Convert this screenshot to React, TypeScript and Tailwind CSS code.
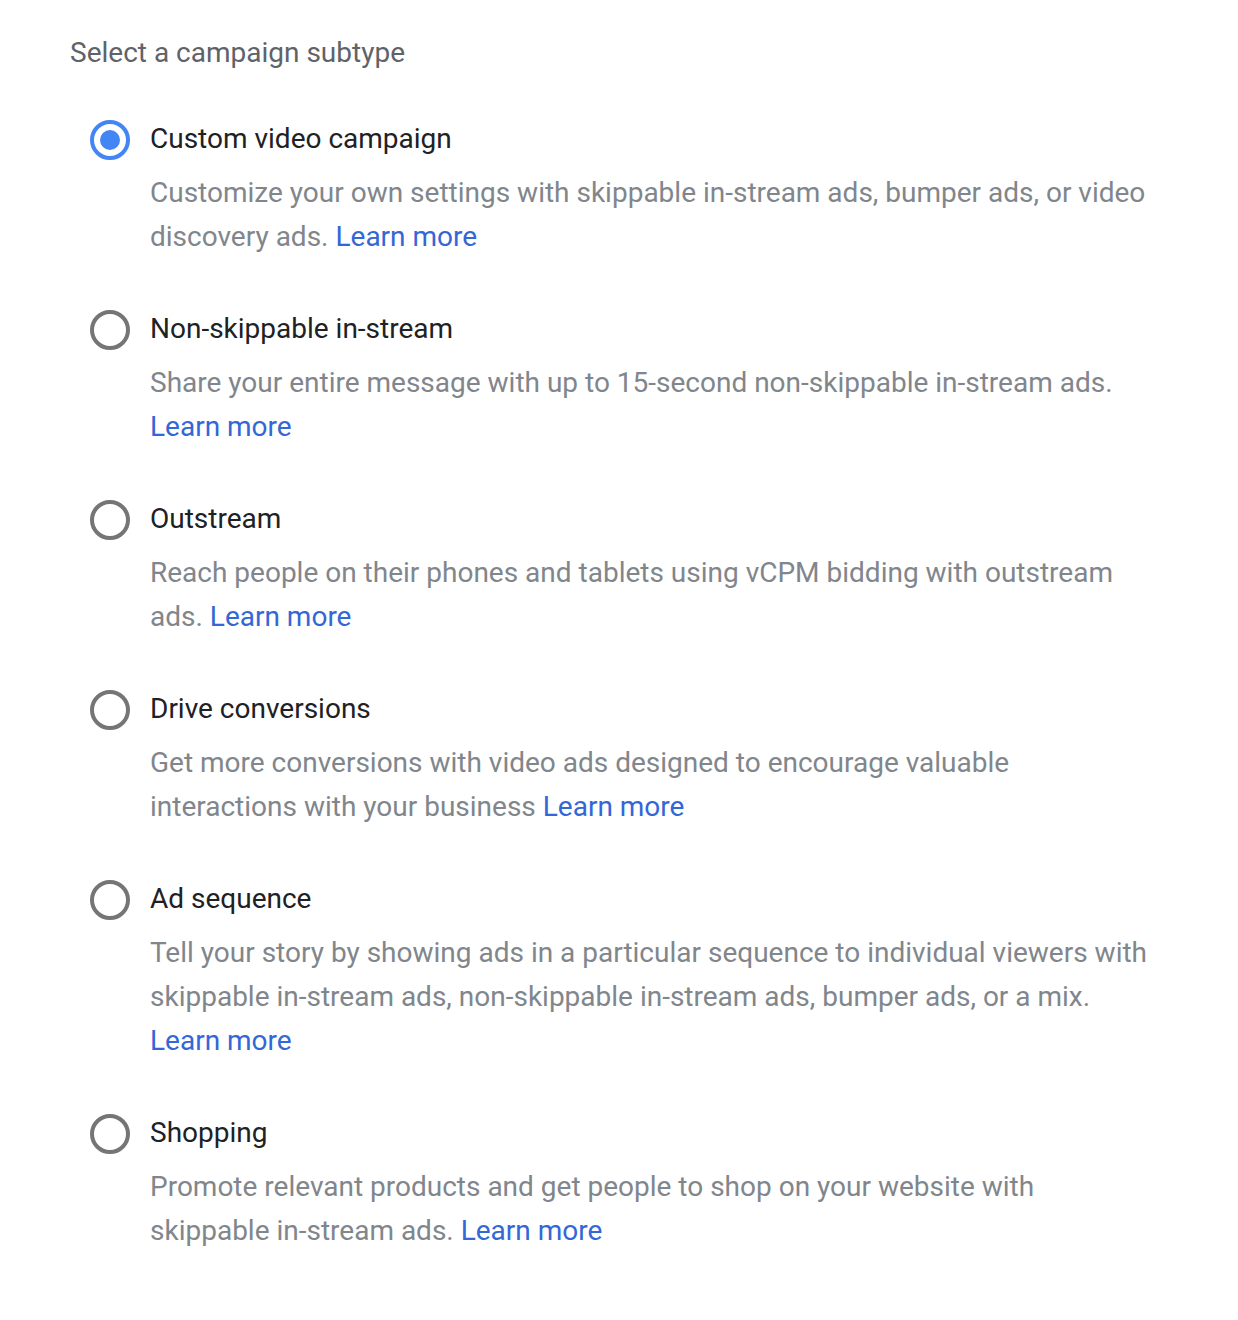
const OPTIONS = [
  {
    title: 'Custom video campaign',
    desc: 'Customize your own settings with skippable in-stream ads, bumper ads, or video discovery ads.',
    checked: true,
  },
  {
    title: 'Non-skippable in-stream',
    desc: 'Share your entire message with up to 15-second non-skippable in-stream ads.',
  },
  {
    title: 'Outstream',
    desc: 'Reach people on their phones and tablets using vCPM bidding with outstream ads.',
  },
  {
    title: 'Drive conversions',
    desc: 'Get more conversions with video ads designed to encourage valuable interactions with your business',
  },
  {
    title: 'Ad sequence',
    desc: 'Tell your story by showing ads in a particular sequence to individual viewers with skippable in-stream ads, non-skippable in-stream ads, bumper ads, or a mix.',
  },
  {
    title: 'Shopping',
    desc: 'Promote relevant products and get people to shop on your website with skippable in-stream ads.',
  },
];

function Radio({ checked }: { checked?: boolean }) {
  return (
    <div
      className={`w-10 h-10 rounded-full border-4 flex items-center justify-center flex-shrink-0 ${
        checked ? 'border-[#4285f4]' : 'border-[#757575]'
      }`}
    >
      {checked && <div className="w-5 h-5 rounded-full bg-[#4285f4]" />}
    </div>
  );
}

export default function App() {
  return (
    <div className="min-h-screen bg-white font-['Roboto',sans-serif] pt-[31px] pl-[70px]">
      <div className="text-[28px] leading-[44px] text-[#5f6368]">Select a campaign subtype</div>

      <div className="mt-[42px] pl-5">
        {OPTIONS.map((o) => (
          <div key={o.title} className="mb-12 flex gap-5">
            <div className="h-11 pt-[1px] flex items-center">
              <Radio checked={o.checked} />
            </div>
            <div className="w-[1010px]">
              <div className="text-[28px] leading-[44px] text-[#202124]">{o.title}</div>
              <div className="mt-[10px] text-[28px] leading-[44px] text-[#80868b]">
                {o.desc}{' '}
                <a className="text-[#3367d6] cursor-pointer whitespace-nowrap">Learn more</a>
              </div>
            </div>
          </div>
        ))}
      </div>
    </div>
  );
}
